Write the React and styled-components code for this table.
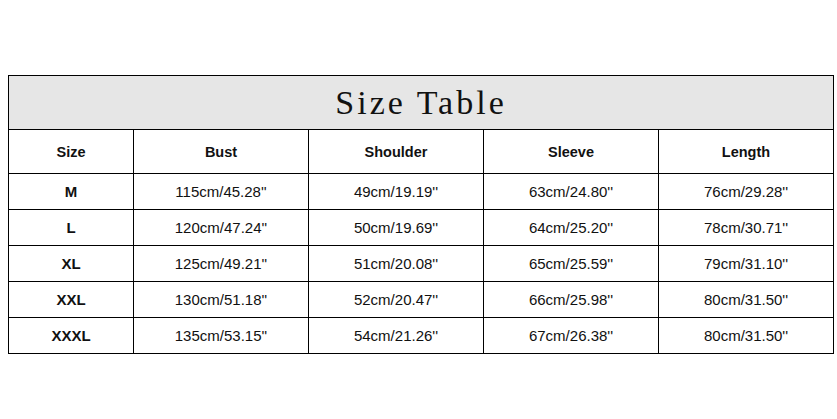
import styled, { createGlobalStyle } from "styled-components";

const GlobalStyle = createGlobalStyle`
  html, body {
    margin: 0;
    padding: 0;
    background: #ffffff;
  }
`;

const rows = [
  ["M", "115cm/45.28''", "49cm/19.19''", "63cm/24.80''", "76cm/29.28''"],
  ["L", "120cm/47.24''", "50cm/19.69''", "64cm/25.20''", "78cm/30.71''"],
  ["XL", "125cm/49.21''", "51cm/20.08''", "65cm/25.59''", "79cm/31.10''"],
  ["XXL", "130cm/51.18''", "52cm/20.47''", "66cm/25.98''", "80cm/31.50''"],
  ["XXXL", "135cm/53.15''", "54cm/21.26''", "67cm/26.38''", "80cm/31.50''"],
];

const headers = ["Size", "Bust", "Shoulder", "Sleeve", "Length"];

const App = () => {
  return (
    <Page>
      <GlobalStyle />
      <Table>
        <colgroup>
          <Col $w={125} />
          <Col $w={175} />
          <Col $w={175} />
          <Col $w={175} />
          <Col $w={175} />
        </colgroup>
        <thead>
          <tr>
            <TitleCell colSpan={5}>Size Table</TitleCell>
          </tr>
          <HeaderRow>
            {headers.map((h) => (
              <HeadCell key={h}>{h}</HeadCell>
            ))}
          </HeaderRow>
        </thead>
        <tbody>
          {rows.map((r) => (
            <DataRow key={r[0]}>
              {r.map((v, i) => (
                <DataCell key={i} $bold={i === 0}>
                  {v}
                </DataCell>
              ))}
            </DataRow>
          ))}
        </tbody>
      </Table>
    </Page>
  );
};

const Page = styled.div`
  width: 837px;
  height: 419px;
  box-sizing: border-box;
  padding: 75px 0 0 8px;
  background: #ffffff;
`;

const Table = styled.table`
  border-collapse: collapse;
  table-layout: fixed;
  width: 826px;
  font-family: "Liberation Sans", Arial, sans-serif;
  color: #111111;
`;

const Col = styled.col`
  width: ${(p) => p.$w}px;
`;

const TitleCell = styled.th`
  height: 53px;
  padding: 0;
  border: 1px solid #000000;
  background: #e6e6e6;
  font-family: "Liberation Serif", "Times New Roman", serif;
  font-weight: 400;
  font-size: 34px;
  letter-spacing: 3px;
  text-align: center;
  color: #111111;
`;

const HeaderRow = styled.tr`
  height: 44px;
`;

const HeadCell = styled.th`
  padding: 0;
  border: 1px solid #000000;
  font-size: 14.5px;
  font-weight: 700;
  text-align: center;
`;

const DataRow = styled.tr`
  height: 36px;
`;

const DataCell = styled.td`
  padding: 0;
  border: 1px solid #000000;
  font-size: 15px;
  font-weight: ${(p) => (p.$bold ? 700 : 400)};
  text-align: center;
`;

export default App;
